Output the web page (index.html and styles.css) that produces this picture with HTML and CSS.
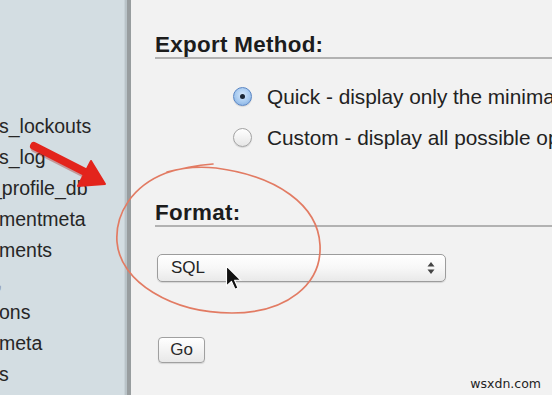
FILE: index.html
```html
<!DOCTYPE html>
<html>
<head>
<meta charset="utf-8">
<link rel="stylesheet" href="styles.css">
</head>
<body>
<div class="page">
  <aside class="sidebar">
    <div class="item">s_lockouts</div>
    <div class="item">s_log</div>
    <div class="item shift">_profile_db</div>
    <div class="item">mentmeta</div>
    <div class="item">ments</div>
    <div class="item"><span class="frag">,</span></div>
    <div class="item">ons</div>
    <div class="item">meta</div>
    <div class="item">s</div>
  </aside>
  <main class="main">
    <h2 class="heading first">Export Method:</h2>
    <div class="options">
      <div class="opt"><span class="radio on"><span class="dot"></span></span><span class="label">Quick - display only the minimal options</span></div>
      <div class="opt"><span class="radio"></span><span class="label">Custom - display all possible options</span></div>
    </div>
    <h2 class="heading second">Format:</h2>
    <div class="select">
      <span class="sel-text">SQL</span>
      <svg class="sel-arrows" width="8" height="14" viewBox="0 0 8 14"><path d="M4 1 L7.5 5.5 L0.5 5.5 Z M4 13 L7.5 8.5 L0.5 8.5 Z" fill="#444"/></svg>
    </div>
    <div class="go">Go</div>
  </main>
  <svg class="overlay" width="552" height="395" viewBox="0 0 552 395">
    <path d="M213 164 Q188 166 166 173 C132 186 115 214 117 242 C120 282 172 313 232 313 C287 313 322 284 320 245 C318 205 277 176 216 168 C196 166 181 168 167 172" fill="none" stroke="#e27b63" stroke-width="1.7" stroke-linecap="round"/>
    <g>
      <path d="M34 146 L87 173" stroke="#a51812" stroke-opacity="0.35" stroke-width="9" stroke-linecap="round" transform="translate(1,2)"/>
      <path d="M34 146 L87 173" stroke="#e3241c" stroke-width="8" stroke-linecap="round"/>
      <path d="M91 161 L105 184 L78 186 Z" fill="#e3241c" stroke="#e3241c" stroke-width="2" stroke-linejoin="round"/>
    </g>
    <path transform="translate(226.5,266) scale(1.25)" d="M0 0 L0 16 L4 12.3 L6.8 18.6 L9.2 17.6 L6.5 11.4 L11.5 11.4 Z" fill="#111" stroke="#fff" stroke-width="0.9" stroke-linejoin="round"/>
  </svg>
  <div class="watermark">wsxdn.com</div>
</div>
</body>
</html>
```

FILE: styles.css
```css
html, body {
  margin: 0;
  padding: 0;
}
body {
  width: 552px;
  height: 395px;
  overflow: hidden;
  background: #f2f2f2;
  font-family: "Liberation Sans", Arial, sans-serif;
}
.page {
  position: relative;
  display: flex;
  width: 552px;
  height: 395px;
  overflow: hidden;
}
.sidebar {
  width: 125px;
  flex: none;
  background: #d3dde2;
  border-right: 2px solid #b9c3c8;
  box-shadow: inset -1px 0 0 #c8d2d7;
  padding-top: 111px;
  overflow: hidden;
}
.item {
  font-size: 19.5px;
  line-height: 31px;
  height: 31px;
  color: #262626;
  white-space: nowrap;
  margin-left: -1px;
}
.item.shift {
  margin-left: -9px;
}
.frag {
  color: #999;
  margin-left: -2px;
}
.main {
  flex: 1;
  border-left: 4px solid #989d9f;
  padding-left: 24px;
  min-width: 0;
  overflow: hidden;
}
.heading {
  margin: 0;
  font-size: 22.4px;
  letter-spacing: 0.3px;
  line-height: 25px;
  font-weight: bold;
  color: #1c1c1c;
  border-bottom: 2px solid #b2b2b2;
  white-space: nowrap;
}
.heading.first {
  margin-top: 32px;
}
.heading.second {
  margin-top: 43px;
}
.options {
  margin-top: 16px;
  padding-left: 78px;
}
.opt {
  display: flex;
  align-items: center;
  height: 41px;
  white-space: nowrap;
}
.radio {
  flex: none;
  width: 17px;
  height: 17px;
  border-radius: 50%;
  border: 1px solid #a3a3a3;
  background: linear-gradient(#ffffff, #e6e6e6);
  box-shadow: 0 1px 1px rgba(0,0,0,0.12);
  display: flex;
  align-items: center;
  justify-content: center;
  margin-right: 15px;
  margin-top: 1px;
}
.radio.on {
  border-color: #5a86c4;
  background: radial-gradient(circle at 50% 40%, #d6e8fb 0%, #a6c9ef 55%, #79a7df 100%);
}
.dot {
  width: 5px;
  height: 5px;
  border-radius: 50%;
  background: #1b2634;
}
.label {
  font-size: 20.8px;
  color: #222;
  padding-top: 3px;
}
.select {
  margin-top: 27px;
  margin-left: 2px;
  width: 289px;
  height: 28px;
  box-sizing: border-box;
  border: 1px solid #9c9c9c;
  border-radius: 5px;
  background: linear-gradient(#ffffff 0%, #f7f7f7 50%, #e9e9e9 100%);
  box-shadow: 0 1px 1px rgba(0,0,0,0.12);
  display: flex;
  align-items: center;
  justify-content: space-between;
  padding: 0 10px 0 13px;
}
.sel-text {
  font-size: 17px;
  color: #252525;
}
.sel-arrows {
  display: block;
}
.go {
  margin-top: 55px;
  margin-left: 3px;
  width: 47px;
  height: 26px;
  box-sizing: border-box;
  border: 1px solid #a0a0a0;
  border-radius: 4px;
  background: linear-gradient(#ffffff, #e8e8e8);
  box-shadow: 0 1px 1px rgba(0,0,0,0.12);
  display: flex;
  align-items: center;
  justify-content: center;
  font-size: 17px;
  color: #2a2a2a;
}
.overlay {
  position: absolute;
  left: 0;
  top: 0;
  pointer-events: none;
}
.watermark {
  position: absolute;
  right: 11px;
  bottom: 4px;
  font-family: "DejaVu Sans", sans-serif;
  font-size: 12.5px;
  color: #222;
}
```
